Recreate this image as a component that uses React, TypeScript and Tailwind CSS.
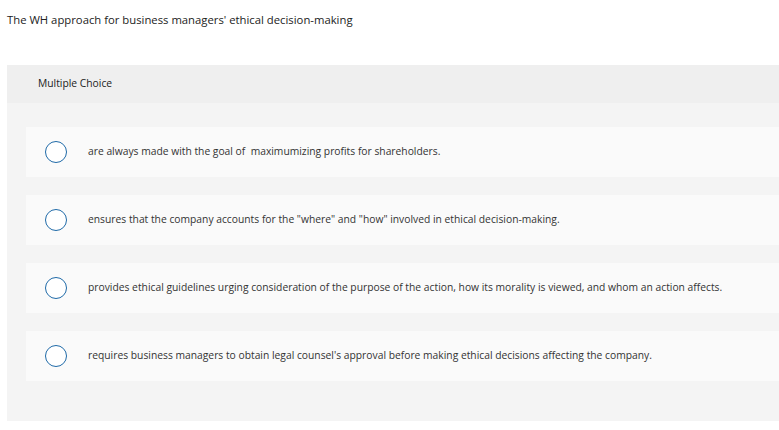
export default function App() {
  const options = [
    "are always made with the goal of\u00a0 maximumizing profits for shareholders.",
    'ensures that the company accounts for the "where" and "how" involved in ethical decision-making.',
    "provides ethical guidelines urging consideration of the purpose of the action, how its morality is viewed, and whom an action affects.",
    "requires business managers to obtain legal counsel's approval before making ethical decisions affecting the company.",
  ];

  return (
    <div
      className="w-[779px] h-[430px] bg-white overflow-hidden text-[#333]"
      style={{ fontFamily: '"Open Sans", "Liberation Sans", Arial, sans-serif' }}
    >
      <div className="pl-[7px] pt-[12px] h-[65px] text-[11.3px] leading-[16px] text-[#222]">
        The WH approach for business managers' ethical decision-making
      </div>

      <div className="ml-[7px] w-[772px] bg-[#f4f4f4]">
        <div className="h-[38px] bg-[#efefef] pl-[31px] flex items-center text-[10.3px] text-[#222]">
          Multiple Choice
        </div>
        <div className="pt-[24px] pb-[40px] pl-[19px] flex flex-col gap-[18px]">
          {options.map((o, i) => (
            <div key={i} className="h-[50px] bg-[#fafafa] flex items-center pl-[19px]">
              <div className="w-[22px] h-[22px] rounded-full border-[1.5px] border-[#1f6aa8] bg-white shrink-0" />
              <div className="ml-[21px] text-[10.3px] text-[#333] whitespace-nowrap">{o}</div>
            </div>
          ))}
        </div>
      </div>
    </div>
  );
}
